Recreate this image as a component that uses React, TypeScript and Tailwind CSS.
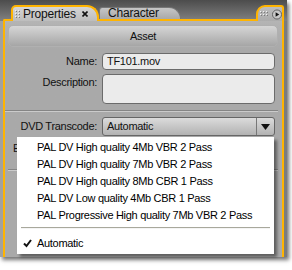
import React, { FC } from 'react';

const presets = [
    'PAL DV High quality 4Mb VBR 2 Pass',
    'PAL DV High quality 7Mb VBR 2 Pass',
    'PAL DV High quality 8Mb CBR 1 Pass',
    'PAL DV Low quality 4Mb CBR 1 Pass',
    'PAL Progressive High quality 7Mb VBR 2 Pass',
];

const GripDots: FC<{ cols: number; rows: number }> = ({ cols, rows }) => (
    <svg width={cols * 3} height={rows * 3} className="shrink-0">
        {Array.from({ length: cols * rows }).map((_, i) => (
            <g key={i}>
                <rect x={(i % cols) * 3 + 1} y={Math.floor(i / cols) * 3 + 1} width="1" height="1" fill="#7a7a7a" />
                <rect x={(i % cols) * 3} y={Math.floor(i / cols) * 3} width="1" height="1" fill="#f2f2f2" />
            </g>
        ))}
    </svg>
);

const Row: FC<{ label: string; top?: boolean; children: React.ReactNode }> = ({ label, top = false, children }) => (
    <div className={`flex gap-[5px] ${top ? 'items-start' : 'items-center'}`}>
        <span className={`w-[92px] shrink-0 text-right ${top ? 'pt-[2px]' : ''}`}>{label}</span>
        {children}
    </div>
);

const Separator: FC = () => <div className="mr-[4px] h-[2px] border-t border-b border-t-[#858585] border-b-[#cbcbcb]" />;

export default function App() {
    return (
        <div className="h-[270px] w-[292px] bg-white font-['Liberation_Sans',Arial,sans-serif] text-[11px] leading-[13px] tracking-[-0.3px] text-[#111]">
            <div className="relative w-[287px] shadow-[2px_3px_4px_rgba(0,0,0,0.55)]">
                {/* tab strip */}
                <div className="flex h-[21px] items-end bg-gradient-to-b from-[#4c4c4c] to-[#828282]">
                    <div className="w-[3px]" />
                    <div className="h-[2px] w-[8px] rounded-tl-[3px] border-l-2 border-t-2 border-[#ffb400]" />
                    <div className="flex h-[16px] w-[88px] items-center rounded-tl-[5px] rounded-tr-[12px] border-2 border-b-0 border-[#ffb400] bg-gradient-to-b from-[#d6d6d6] to-[#bdbdbd] pl-[2px]">
                        <GripDots cols={2} rows={3} />
                        <span className="ml-[2px] text-[12px] tracking-[-0.2px]">Properties</span>
                        <svg width="6" height="6" viewBox="0 0 6 6" className="ml-[6px]">
                            <path d="M0.5 0.5 L5.5 5.5 M5.5 0.5 L0.5 5.5" stroke="#111" strokeWidth="1.6" />
                        </svg>
                    </div>
                    <div className="flex h-[16px] w-[157px] items-end border-b-2 border-[#ffb400]">
                        <div className="flex h-[12px] w-[82px] items-center rounded-tl-[4px] rounded-tr-[14px] border border-b-0 border-[#777] bg-gradient-to-b from-[#c6c6c6] to-[#a9a9a9] pl-[8px] text-[12px] tracking-[-0.2px]">
                            Character
                        </div>
                    </div>
                    <div className="flex h-[16px] w-[28px] items-center gap-[3px] rounded-tl-[9px] rounded-tr-[3px] border-2 border-b-0 border-[#ffb400] bg-gradient-to-b from-[#bdbdbd] to-[#acacac] pl-[2px]">
                        <GripDots cols={3} rows={2} />
                        <svg width="11" height="11" viewBox="0 0 11 11">
                            <circle cx="5.5" cy="5.5" r="5" fill="#c8c8c8" stroke="#5a5a5a" />
                            <path d="M4 3 L8 5.5 L4 8 Z" fill="#111" />
                        </svg>
                    </div>
                    <div className="w-[3px]" />
                </div>

                {/* panel body */}
                <div className="flex h-[236px]">
                    <div className="w-[3px] bg-[#a1a1a1]" />
                    <div className="flex w-[281px] flex-col border-x-2 border-[#ffb400] bg-gradient-to-b from-[#b4b4b4] to-[#a9a9a9] to-[12%]">
                        <div className="ml-[3px] mr-[4px] mt-[4px] flex h-[22px] items-center justify-center rounded-[5px] border border-[#b0b0b0] bg-gradient-to-b from-[#d6d6d6] to-[#a6a6a6]">
                            Asset
                        </div>
                        <div className="mt-[6px]">
                            <Row label="Name:">
                                <div className="flex h-[17px] w-[173px] items-center rounded-[4px] border border-[#6b6b6b] bg-[#ebebeb] pl-[4px]">
                                    TF101.mov
                                </div>
                            </Row>
                        </div>
                        <div className="mt-[4px]">
                            <Row label="Description:" top>
                                <div className="h-[30px] w-[173px] rounded-[4px] border border-[#6b6b6b] bg-[#ebebeb]" />
                            </Row>
                        </div>
                        <div className="mt-[6px]">
                            <Separator />
                        </div>
                        <div className="mt-[5px]">
                            <Row label="DVD Transcode:">
                                <div className="flex h-[19px] w-[173px] items-center rounded-[3px] border border-[#666] bg-gradient-to-b from-[#dcdcdc] to-[#b2b2b2]">
                                    <span className="flex-1 pl-[4px]">Automatic</span>
                                    <span className="flex h-full w-[18px] items-center justify-center border-l border-[#777]">
                                        <svg width="9" height="6" viewBox="0 0 9 6">
                                            <path d="M0 0 H9 L4.5 6 Z" fill="#111" />
                                        </svg>
                                    </span>
                                </div>
                            </Row>
                        </div>
                        <div className="ml-[8px] mt-[6px] w-[6px] overflow-hidden whitespace-nowrap">E</div>
                        <div className="mt-[14px] pl-[3px]">
                            <Separator />
                        </div>
                    </div>
                    <div className="w-[3px] bg-[#7c7c7c]" />
                </div>

                {/* open dropdown menu */}
                <div className="absolute left-[17px] top-[137px] flex w-[257px] flex-col bg-white pb-[2px] pt-[2px] text-black shadow-[3px_3px_3px_rgba(0,0,0,0.45)]">
                    {presets.map((p) => (
                        <div key={p} className="flex h-[17px] items-center pl-[20px] text-[11px]">
                            {p}
                        </div>
                    ))}
                    <div className="mx-[4px] mb-[6px] mt-[3px] h-[2px] border-t border-[#a8a89c] border-b border-b-[#f4f4f4]" />
                    <div className="flex h-[17px] items-center">
                        <svg width="20" height="17" viewBox="0 0 20 17" className="shrink-0">
                            <path d="M7 8.5 L9.5 11 L14 5" fill="none" stroke="#111" strokeWidth="2" />
                        </svg>
                        <span>Automatic</span>
                    </div>
                </div>
            </div>
        </div>
    );
}
